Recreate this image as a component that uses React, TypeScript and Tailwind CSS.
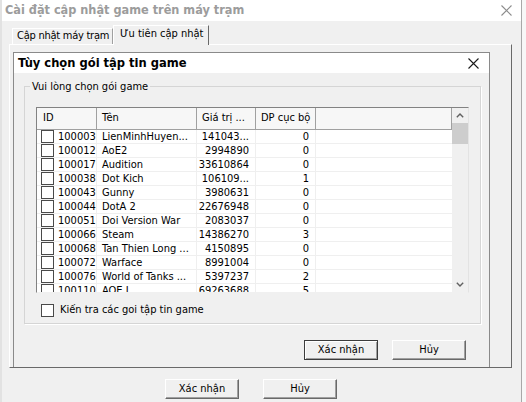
import clsx from 'clsx';

type GameRow = { id: string; name: string; size: string; dp: string };

const ROWS: GameRow[] = [
  { id: '100003', name: 'LienMinhHuyen...', size: '141043...', dp: '0' },
  { id: '100012', name: 'AoE2', size: '2994890', dp: '0' },
  { id: '100017', name: 'Audition', size: '33610864', dp: '0' },
  { id: '100038', name: 'Dot Kich', size: '106109...', dp: '1' },
  { id: '100043', name: 'Gunny', size: '3980631', dp: '0' },
  { id: '100044', name: 'DotA 2', size: '22676948', dp: '0' },
  { id: '100051', name: 'Doi Version War', size: '2083037', dp: '0' },
  { id: '100066', name: 'Steam', size: '14386270', dp: '3' },
  { id: '100068', name: 'Tan Thien Long ...', size: '4150895', dp: '0' },
  { id: '100072', name: 'Warface', size: '8991004', dp: '0' },
  { id: '100076', name: 'World of Tanks ...', size: '5397237', dp: '2' },
  { id: '100110', name: 'AOE I', size: '69263688', dp: '5' },
];

function CloseIcon({ color }: { color: string }) {
  return (
    <svg width="11" height="11" viewBox="0 0 11 11" fill="none">
      <path d="M0.5 0.5L10.5 10.5M10.5 0.5L0.5 10.5" stroke={color} strokeWidth="1.1" />
    </svg>
  );
}

function Chevron({ down }: { down?: boolean }) {
  return (
    <svg width="8" height="5" viewBox="0 0 8 5" fill="none">
      <path
        d={down ? 'M0.8 0.8L4 4L7.2 0.8' : 'M0.8 4.2L4 1L7.2 4.2'}
        stroke="#606060"
        strokeWidth="1.4"
      />
    </svg>
  );
}

function CheckBox() {
  return <div className="h-[13px] w-[13px] shrink-0 border border-[#4a4a4a] bg-white" />;
}

function WinButton({ label, isDefault }: { label: string; isDefault?: boolean }) {
  return (
    <div
      className={clsx(
        'flex h-[20px] w-[74px] items-center justify-center bg-[#f0f0f0] text-[11px] text-black',
        isDefault
          ? 'border border-[#3c3c3c] shadow-[inset_1px_1px_0_#ffffff,inset_-1px_-1px_0_#a0a0a0]'
          : 'border border-t-white border-l-white border-r-[#696969] border-b-[#696969] shadow-[inset_-1px_-1px_0_#a0a0a0]'
      )}
    >
      {label}
    </div>
  );
}

function GameList() {
  return (
    <div className="ml-[6px] flex h-[186px] w-[433px] overflow-hidden border border-t-[#828282] border-l-[#828282] border-r-[#e3e3e3] border-b-[#f0f0f0] bg-white">
      <div className="flex w-[415px] flex-col">
        <div className="flex h-[22px] shrink-0 border-b border-[#a0a0a0] bg-[#f7f7f7]">
          <div className="flex w-[60px] items-center border-r border-[#a0a0a0] pl-[6px]">ID</div>
          <div className="flex w-[100px] items-center border-r border-[#a0a0a0] pl-[5px]">Tên</div>
          <div className="flex w-[59px] items-center border-r border-[#a0a0a0] pl-[5px]">Giá trị ...</div>
          <div className="flex w-[60px] items-center border-r border-[#a0a0a0] pl-[5px]">DP cục bộ</div>
          <div className="flex-1 border-r border-[#a0a0a0]" />
        </div>
        {ROWS.map((r) => (
          <div key={r.id} className="flex h-[14px] shrink-0 border-b border-[#efefef] leading-[13px]">
            <div className="flex w-[60px] items-center gap-[4px] border-r border-[#efefef] pl-[4px]">
              <CheckBox />
              <span>{r.id}</span>
            </div>
            <div className="flex w-[100px] items-center border-r border-[#efefef] pl-[5px] whitespace-nowrap">
              {r.name}
            </div>
            <div className="flex w-[59px] items-center justify-end border-r border-[#efefef] pr-[6px]">
              {r.size}
            </div>
            <div className="flex w-[60px] items-center justify-end border-r border-[#efefef] pr-[6px]">
              {r.dp}
            </div>
            <div className="flex-1" />
          </div>
        ))}
      </div>
      <div className="flex w-[16px] flex-col bg-[#f0f0f0]">
        <div className="flex h-[15px] items-center justify-center">
          <Chevron />
        </div>
        <div className="h-[21px] bg-[#cdcdcd]" />
        <div className="flex-1" />
        <div className="flex h-[15px] items-center justify-center">
          <Chevron down />
        </div>
      </div>
    </div>
  );
}

function PackageDialog() {
  return (
    <div className="ml-[3px] mt-[7px] flex h-[330px] w-[477px] flex-col border border-[#8a8a8a] bg-[#f0f0f0]">
      <div className="flex h-[20px] shrink-0 items-center justify-between bg-white pl-[4px] pr-[10px]">
        <span className="text-[12.8px] font-bold text-black">Tùy chọn gói tập tin game</span>
        <CloseIcon color="#1a1a1a" />
      </div>
      <fieldset className="ml-[10px] mt-[7px] h-[244px] w-[457px] border border-[#d5d5d5] pl-[5px] shadow-[1px_1px_0_#ffffff]">
        <legend className="px-[2px] leading-[13px]">Vui lòng chọn gói game</legend>
        <div className="mt-[14px]">
          <GameList />
        </div>
        <div className="ml-[11px] mt-[9px] flex items-center gap-[6px]">
          <CheckBox />
          <span>Kiến tra các goi tập tin game</span>
        </div>
      </fieldset>
      <div className="mt-[16px] flex justify-end gap-[14px] pr-[23px]">
        <WinButton label="Xác nhận" isDefault />
        <WinButton label="Hủy" />
      </div>
    </div>
  );
}

export default function App() {
  return (
    <div className="flex h-[402px] w-[526px] overflow-hidden bg-[#f0f0f0] font-['DejaVu_Sans_Condensed','Liberation_Sans',sans-serif] text-[11px] text-black">
      <div className="flex w-[521px] flex-col border-l-2 border-[#e2e2e2]">
        <div className="flex h-[21px] shrink-0 items-center justify-between bg-white pl-[3px] pr-[9px]">
          <span className="text-[12.6px] font-bold text-[#9c9c9c]">Cài đặt cập nhật game trên máy trạm</span>
          <CloseIcon color="#8c8c8c" />
        </div>
        <div className="flex h-[23px] shrink-0 items-end pl-[10px]">
          <div className="flex h-[16px] w-[101px] items-center whitespace-nowrap border-l border-t border-r border-l-white border-t-white border-r-[#a0a0a0] pl-[4px] tracking-[-0.25px]">
            Cập nhật máy trạm
          </div>
          <div className="relative z-10 -mb-[1px] flex h-[20px] w-[96px] items-center whitespace-nowrap border-l border-t border-r border-l-white border-t-white border-r-[#696969] bg-[#f0f0f0] pl-[6px] pb-[2px]">
            Ưu tiên cập nhật
          </div>
        </div>
        <div className="ml-[7px] h-[324px] w-[503px] shrink-0 overflow-hidden border border-t-white border-l-white border-r-[#696969] border-b-[#696969]">
          <PackageDialog />
        </div>
        <div className="ml-[163px] mt-[11px] flex gap-[24px]">
          <WinButton label="Xác nhận" />
          <WinButton label="Hủy" />
        </div>
      </div>
      <div className="flex-1 border-l border-[#a8a8a8] bg-[#f7f7f7]" />
    </div>
  );
}
